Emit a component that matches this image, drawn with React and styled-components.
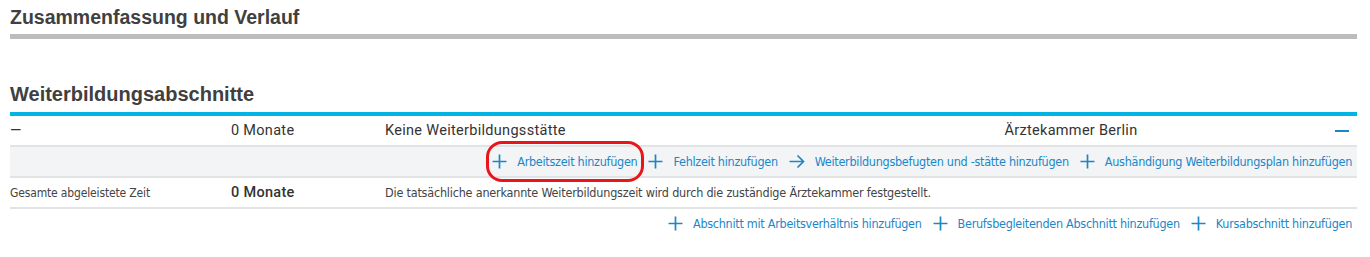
import React from 'react';
import styled, { createGlobalStyle } from 'styled-components';

const GlobalStyle = createGlobalStyle`
    body{
        margin: 0;
        background: #fff;
        font-family: "DejaVu Sans Condensed", "DejaVu Sans", sans-serif;
        font-stretch: condensed;
        color: #333;
    }
`;

const PlusIcon = () => (
    <svg width="15" height="15" viewBox="0 0 15 15" fill="none" stroke="currentColor" strokeWidth="1.7">
        <path d="M7.5 0.5v14M0.5 7.5h14" />
    </svg>
);

const ArrowIcon = () => (
    <svg width="16" height="15" viewBox="0 0 16 15" fill="none" stroke="currentColor" strokeWidth="1.7">
        <path d="M0.5 7.5h14M8.5 1.5l6 6-6 6" />
    </svg>
);

const Link = ({ icon, children, marked }) => (
    <LinkItem $marked={marked}>
        {icon === 'arrow' ? <ArrowIcon /> : <PlusIcon />}
        <span>{children}</span>
    </LinkItem>
);

const App = () => {
    return (
        <Page>
            <GlobalStyle />
            <Section>
                <H2>Zusammenfassung und Verlauf</H2>
                <Bar />
            </Section>
            <Section>
                <H2 $big>Weiterbildungsabschnitte</H2>
                <Bar $blue />
                <Row>
                    <Cell>—</Cell>
                    <Cell>0 Monate</Cell>
                    <Cell>Keine Weiterbildungsstätte</Cell>
                    <Cell $center>Ärztekammer Berlin</Cell>
                    <Minus />
                </Row>
                <Actions $grey>
                    <Link marked>Arbeitszeit hinzufügen</Link>
                    <Link>Fehlzeit hinzufügen</Link>
                    <Link icon="arrow">Weiterbildungsbefugten und -stätte hinzufügen</Link>
                    <Link>Aushändigung Weiterbildungsplan hinzufügen</Link>
                </Actions>
                <Row>
                    <Label>Gesamte abgeleistete Zeit</Label>
                    <Cell $bold>0 Monate</Cell>
                    <Note>Die tatsächliche anerkannte Weiterbildungszeit wird durch die zuständige Ärztekammer festgestellt.</Note>
                </Row>
                <Actions>
                    <Link>Abschnitt mit Arbeitsverhältnis hinzufügen</Link>
                    <Link>Berufsbegleitenden Abschnitt hinzufügen</Link>
                    <Link>Kursabschnitt hinzufügen</Link>
                </Actions>
            </Section>
        </Page>
    );
}

const Page = styled.div`
    width: 1347px;
    padding: 4px 0 0 10px;
`;
const Section = styled.section`
    & + &{
        margin-top: 42px;
    }
`;
const H2 = styled.h2`
    margin: 0;
    font-family: "Liberation Sans", sans-serif;
    font-weight: 700;
    font-size: ${p => p.$big ? '20px' : '19.5px'};
    line-height: 26px;
    color: #404040;
    padding-bottom: ${p => p.$big ? '5px' : '4px'};
`;
const Bar = styled.div`
    height: ${p => p.$blue ? '4px' : '5px'};
    background: ${p => p.$blue ? '#00b4e4' : '#bcbcbc'};
`;
const Row = styled.div`
    display: grid;
    grid-template-columns: 221px 154px 437px 1fr 37px;
    align-items: center;
    height: 29px;
    border-bottom: 2px solid #e2e3e5;
`;
const Cell = styled.div`
    font-size: 14.5px;
    letter-spacing: 0.3px;
    font-family: Roboto, "Liberation Sans", sans-serif;
    font-stretch: normal;
    font-weight: ${p => p.$bold ? 500 : 400};
    color: #333;
    text-align: ${p => p.$center ? 'center' : 'left'};
`;
const Label = styled.div`
    font-size: 12px;
    letter-spacing: -0.15px;
    color: #444;
`;
const Note = styled.div`
    grid-column: 3 / 6;
    font-size: 12.5px;
    letter-spacing: -0.2px;
    color: #444;
`;
const Minus = styled.div`
    justify-self: end;
    margin-right: 8px;
    width: 14px;
    height: 2px;
    background: #1a87c9;
`;
const Actions = styled.div`
    display: flex;
    justify-content: flex-end;
    align-items: center;
    gap: 11px;
    height: ${p => p.$grey ? '29px' : '28px'};
    padding-right: 5px;
    background: ${p => p.$grey ? '#f3f4f6' : 'transparent'};
    border-bottom: ${p => p.$grey ? '2px solid #e2e3e5' : 'none'};
`;
const LinkItem = styled.a`
    position: relative;
    display: flex;
    align-items: center;
    gap: 10px;
    color: #1a87c9;
    font-size: 12.5px;
    letter-spacing: -0.28px;
    cursor: pointer;

    &:after{
        content: '';
        display: ${p => p.$marked ? 'block' : 'none'};
        position: absolute;
        left: -6px;
        right: -7px;
        top: -13px;
        bottom: -13px;
        border: 3px solid #e8161b;
        border-radius: 16px;
    }
`;

export default App;
